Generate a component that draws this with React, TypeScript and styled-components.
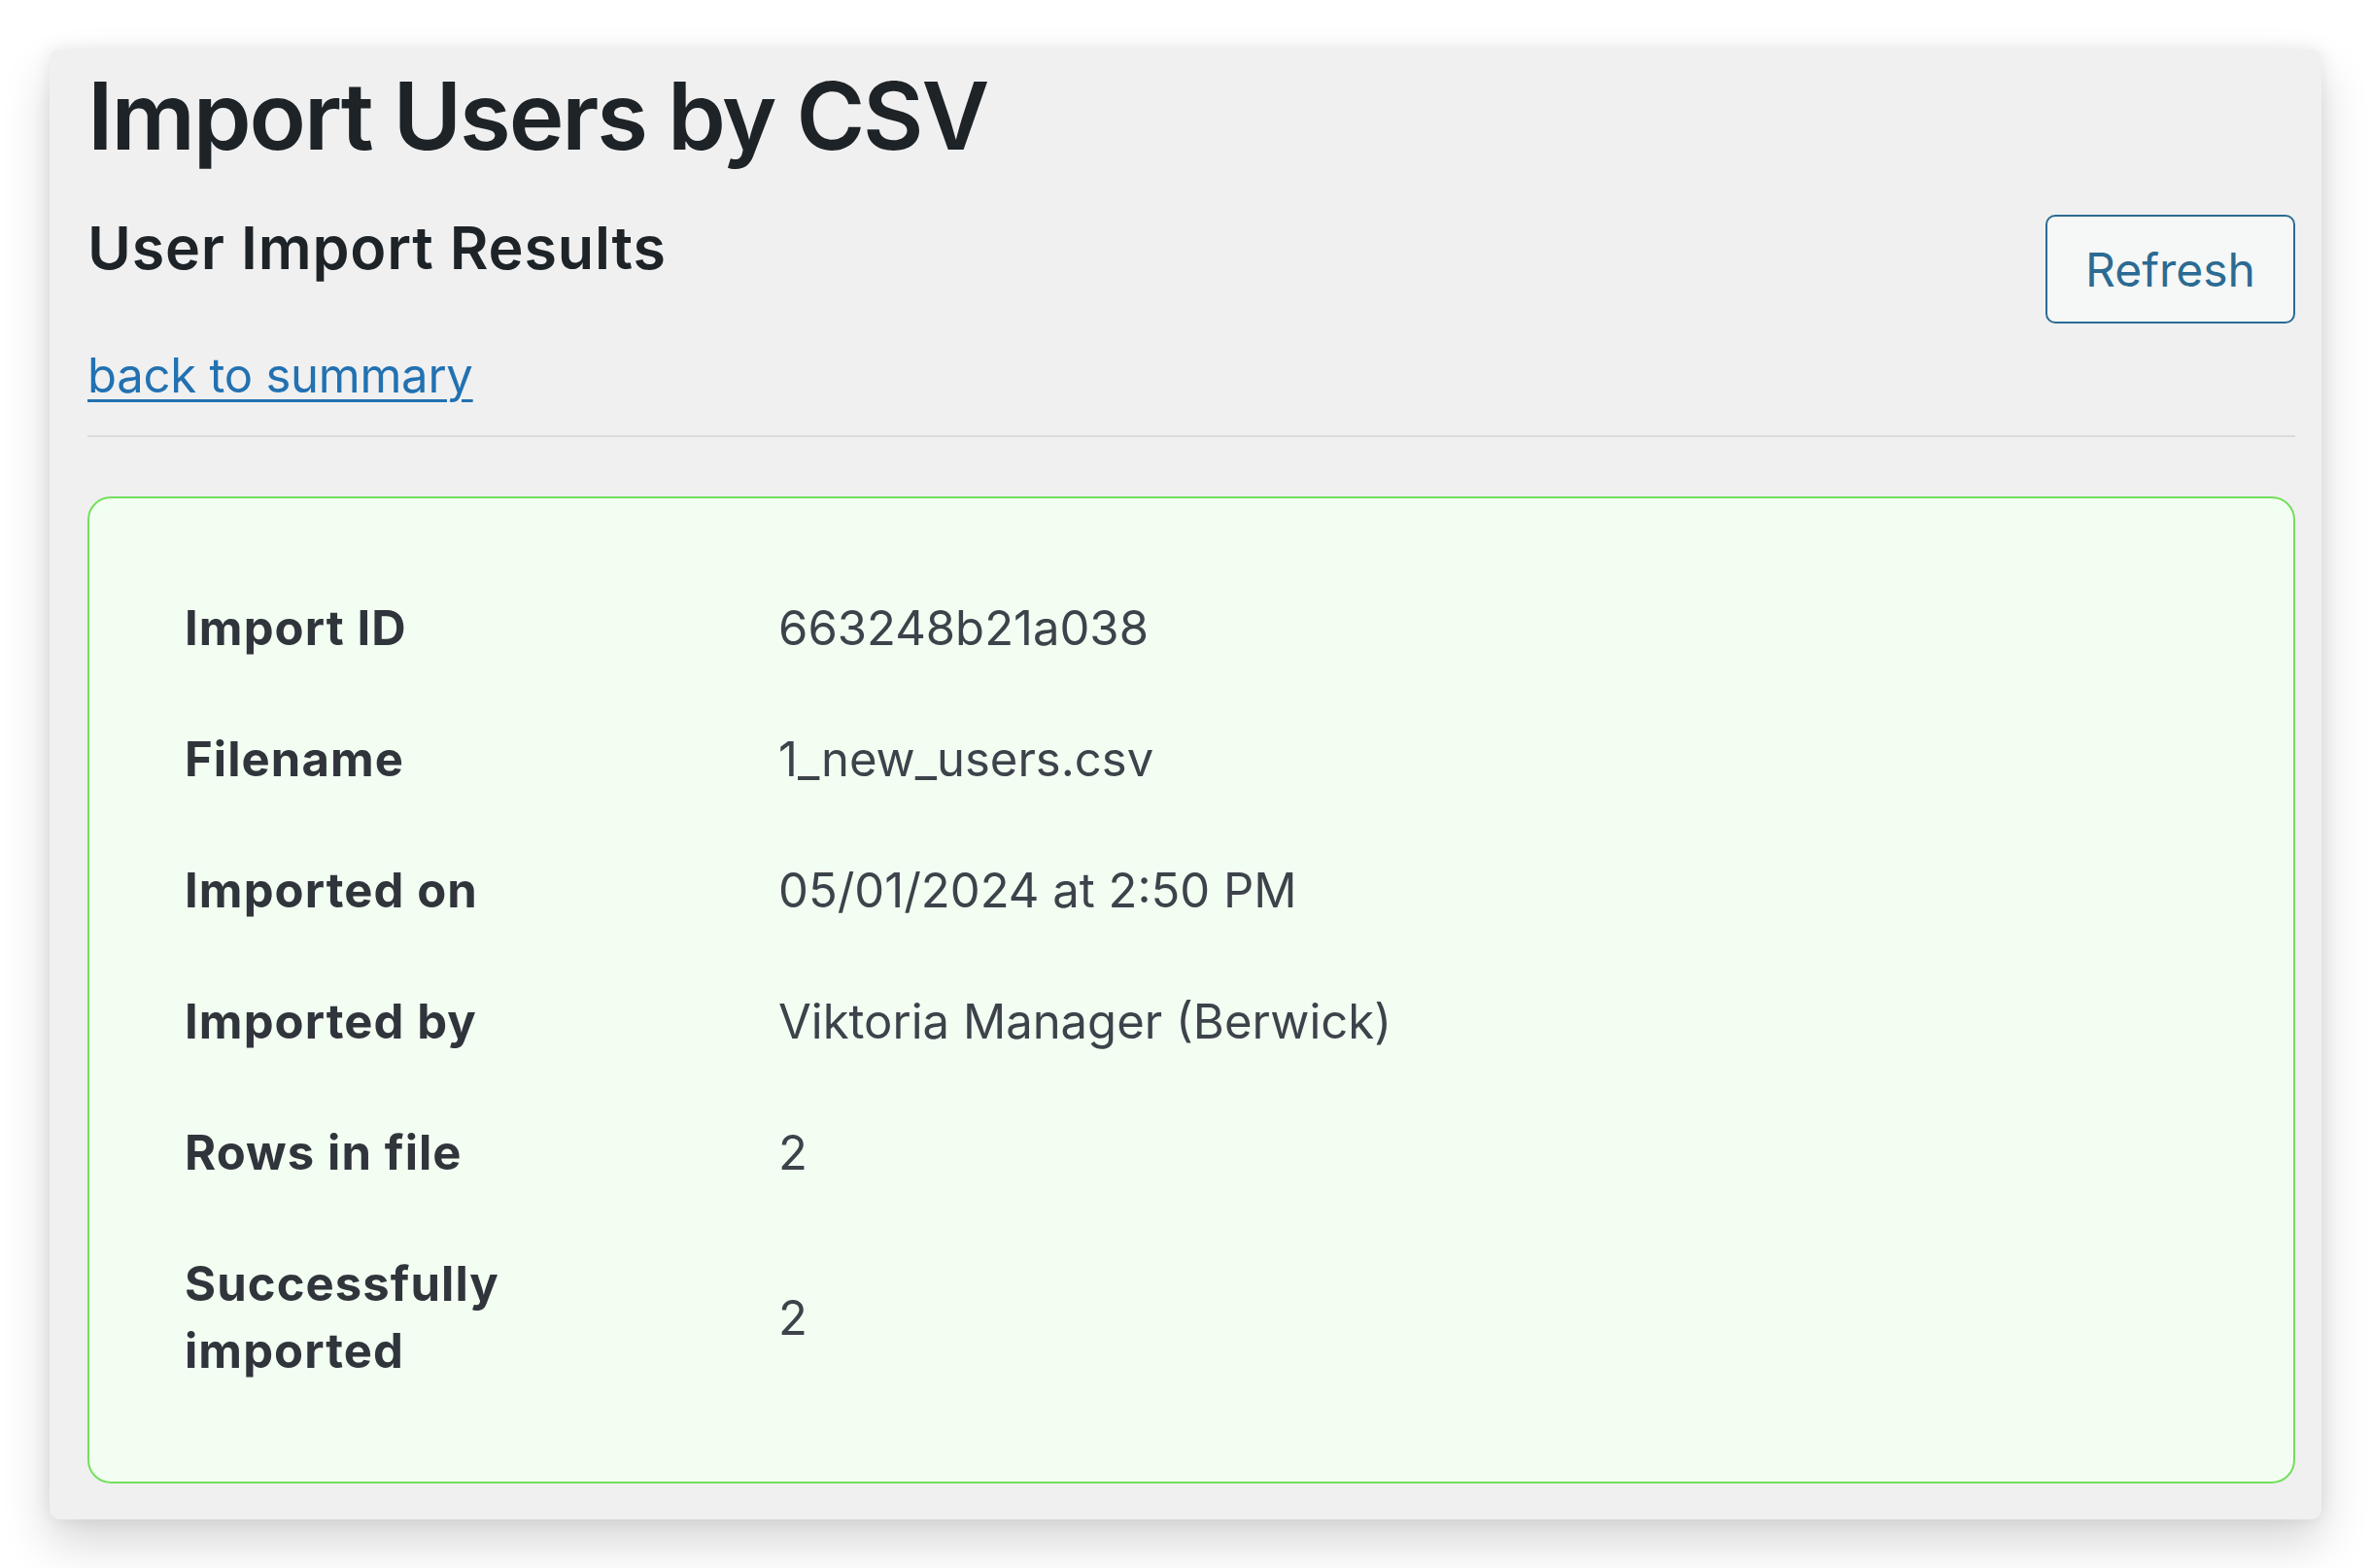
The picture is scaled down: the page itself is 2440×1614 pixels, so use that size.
import { Fragment } from 'react'
import styled, { createGlobalStyle } from 'styled-components'

type ResultRow = {
  label: string
  value: string
}

const rows: ResultRow[] = [
  { label: 'Import ID', value: '663248b21a038' },
  { label: 'Filename', value: '1_new_users.csv' },
  { label: 'Imported on', value: '05/01/2024 at 2:50 PM' },
  { label: 'Imported by', value: 'Viktoria Manager (Berwick)' },
  { label: 'Rows in file', value: '2' },
  { label: 'Successfully imported', value: '2' },
]

const GlobalStyle = createGlobalStyle`
  html, body {
    margin: 0;
    padding: 0;
    background: #ffffff;
  }
  body {
    font-family: Inter, "Noto Sans", "Liberation Sans", sans-serif;
    -webkit-font-smoothing: antialiased;
  }
`

const Page = styled.div`
  padding: 51px;
`

const Window = styled.main`
  background: #f0f0f1;
  border-radius: 10px;
  box-shadow: 0 24px 50px rgba(0, 0, 0, 0.16), 0 0 18px rgba(0, 0, 0, 0.08);
  padding: 11px 27px 37px 39px;
`

const Title = styled.h1`
  margin: 0 0 39px;
  font-size: 96px;
  line-height: 1.2;
  font-weight: 600;
  letter-spacing: -0.022em;
  color: #1d2327;
`

const Header = styled.div`
  display: flex;
  justify-content: space-between;
  align-items: flex-start;
`

const Subtitle = styled.h2`
  margin: 0 0 58px;
  font-size: 61px;
  line-height: 78px;
  font-weight: 600;
  letter-spacing: 0.013em;
  color: #1d2327;
`

const BackLink = styled.a`
  display: inline-block;
  font-size: 49px;
  line-height: 69px;
  letter-spacing: -0.005em;
  color: #2271b1;
  text-decoration: underline;
  text-decoration-thickness: 3px;
  text-underline-offset: 7px;
`

const RefreshButton = styled.button`
  margin-top: 5px;
  height: 112px;
  padding: 0 39px;
  background: #f6f7f7;
  border: 2px solid #2b6b93;
  border-radius: 10px;
  color: #2b6b93;
  font-family: inherit;
  font-size: 48px;
  font-weight: 400;
  cursor: pointer;
`

const Divider = styled.hr`
  margin: 27px 0 61px;
  border: 0;
  border-top: 2px solid #dcdcde;
`

const ResultBox = styled.section`
  background: #f3fef2;
  border: 2px solid #72e05c;
  border-radius: 24px;
  padding: 66px 98px 67px;
`

const Table = styled.div`
  display: grid;
  grid-template-columns: 611px 1fr;
`

const Label = styled.div`
  display: flex;
  align-items: center;
  padding: 33px 0;
  font-size: 49px;
  line-height: 69px;
  font-weight: 700;
  letter-spacing: 0.022em;
  color: #2f353b;

  span {
    max-width: 420px;
  }
`

const Value = styled.div`
  display: flex;
  align-items: center;
  padding: 33px 0;
  font-size: 49px;
  line-height: 69px;
  font-weight: 400;
  color: #3c434a;
`

export default function App() {
  return (
    <>
      <GlobalStyle />
      <Page>
        <Window>
          <Title>Import Users by CSV</Title>
          <Header>
            <div>
              <Subtitle>User Import Results</Subtitle>
              <BackLink href="#">back to summary</BackLink>
            </div>
            <RefreshButton type="button">Refresh</RefreshButton>
          </Header>
          <Divider />
          <ResultBox>
            <Table>
              {rows.map((row) => (
                <Fragment key={row.label}>
                  <Label>
                    <span>{row.label}</span>
                  </Label>
                  <Value>{row.value}</Value>
                </Fragment>
              ))}
            </Table>
          </ResultBox>
        </Window>
      </Page>
    </>
  )
}
